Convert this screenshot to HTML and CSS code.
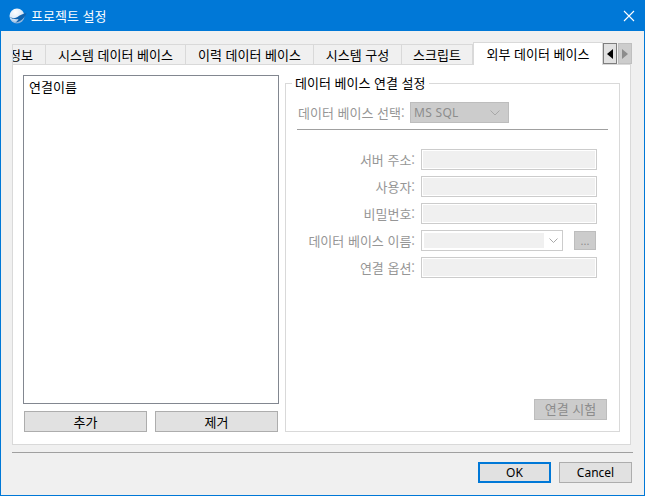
FILE: index.html
```html
<!DOCTYPE html>
<html lang="ko">
<head>
<meta charset="utf-8">
<title>프로젝트 설정</title>
<link rel="stylesheet" href="styles.css">
</head>
<body>
<div class="window">
  <header class="titlebar">
    <svg class="app-icon" width="18" height="16" viewBox="0 0 18 16">
      <defs><radialGradient id="g" cx="0.4" cy="0.25" r="0.85"><stop offset="0" stop-color="#ffffff"/><stop offset="0.55" stop-color="#dbe9f7"/><stop offset="1" stop-color="#5f97cf"/></radialGradient></defs>
      <ellipse cx="8" cy="8" rx="7.500" ry="7.500" fill="url(#g)"/>
      <path d="M0.500 9c3 1.500 6 1.500 8 0 2-1.500 5-3.500 9-4-1 3-3 5.500-5 7-2 1.500-4 2.500-6 2.500 1.500-1 2.500-2.200 3-3.500-3 .5-6.500 0-9-2z" fill="#0f62ae"/>
    </svg>
    <span class="title">프로젝트 설정</span>
    <svg class="close" width="12" height="12" viewBox="0 0 12 12"><path d="M1 1l10 10M11 1L1 11" stroke="#fff" stroke-width="1.100" fill="none"/></svg>
  </header>
  <main class="content">
    <div class="tabstrip">
      <div class="tab tab-clip">정보</div>
      <div class="tab tab-a">시스템 데이터 베이스</div>
      <div class="tab tab-b">이력 데이터 베이스</div>
      <div class="tab tab-c">시스템 구성</div>
      <div class="tab tab-d">스크립트</div>
      <div class="tab tab-active">외부 데이터 베이스</div>
      <div class="spin spin-on"><svg width="6" height="10" viewBox="0 0 6 10"><path d="M6 0v10L0 5z" fill="#000"/></svg></div>
      <div class="spin spin-off"><svg width="6" height="10" viewBox="0 0 6 10"><path d="M0 0v10l6-5z" fill="#8c8c8c"/></svg></div>
    </div>
    <section class="panel">
      <div class="left">
        <div class="list">연결이름</div>
        <div class="left-actions">
          <button class="btn">추가</button>
          <button class="btn">제거</button>
        </div>
      </div>
      <fieldset class="group">
        <legend class="legend">데이터 베이스 연결 설정</legend>
        <div class="db-row">
          <span class="db-label">데이터 베이스 선택:</span>
          <div class="db-select"><span>MS SQL</span>
            <svg width="10" height="6" viewBox="0 0 10 6"><path d="M.5.500L5 5 9.500.5" stroke="#a8a8a8" fill="none"/></svg>
          </div>
        </div>
        <div class="rule"></div>
        <div class="form">
          <div class="row"><span class="label">서버 주소:</span><div class="field"></div></div>
          <div class="row"><span class="label">사용자:</span><div class="field"></div></div>
          <div class="row"><span class="label">비밀번호:</span><div class="field"></div></div>
          <div class="row">
            <span class="label">데이터 베이스 이름:</span>
            <div class="combo"><div class="combo-fill"></div>
              <svg width="9" height="5" viewBox="0 0 9 5"><path d="M.5.500L4.500 4.500l4-4" stroke="#a8a8a8" fill="none"/></svg>
            </div>
            <div class="browse">...</div>
          </div>
          <div class="row"><span class="label">연결 옵션:</span><div class="field"></div></div>
        </div>
        <div class="test-row"><div class="test">연결 시험</div></div>
      </fieldset>
    </section>
    <div class="divider"></div>
    <footer class="footer">
      <button class="btn btn-dlg btn-default">OK</button>
      <button class="btn btn-dlg">Cancel</button>
    </footer>
  </main>
</div>
</body>
</html>
```
FILE: styles.css
```css
* { box-sizing: border-box; }
html, body { margin: 0; padding: 0; }
body {
  width: 645px;
  height: 496px;
  overflow: hidden;
  font-family: "Noto Sans CJK KR", "Noto Sans", sans-serif;
  font-size: 13px;
  color: #000;
}
.window {
  width: 645px;
  height: 496px;
  border: 1px solid #0078d7;
  border-top: 0;
  background: #f0f0f0;
  display: flex;
  flex-direction: column;
}
.titlebar {
  height: 31px;
  margin: 0 -1px;
  background: #0078d7;
  color: #fff;
  display: flex;
  align-items: center;
  padding: 0 8px 0 9px;
}
.app-icon { flex: none; margin-right: 4px; }
.title { flex: 1; font-size: 13px; }
.close { flex: none; margin-right: 2px; }
.content { flex: 1; display: flex; flex-direction: column; padding: 0 12px 0 11px; }
.tabstrip {
  height: 34px;
  padding-top: 11px;
  display: flex;
  align-items: flex-start;
}
.tab {
  height: 20px;
  margin-top: 2px;
  background: #f0f0f0;
  border: 1px solid #d9d9d9;
  border-bottom: 0;
  border-left: 0;
  display: flex;
  align-items: center;
  justify-content: center;
  white-space: nowrap;
  overflow: hidden;
  line-height: 18px;
}
.tab-clip { width: 34px; justify-content: flex-end; padding-right: 12px; border-left: 1px solid #d9d9d9; }
.tab-a { width: 140px; }
.tab-b { width: 128px; }
.tab-c { width: 88px; }
.tab-d { width: 71px; }
.tab-active {
  width: 130px;
  height: 23px;
  margin-top: 0;
  background: #fff;
  border-left: 1px solid #d9d9d9;
  position: relative;
  z-index: 1;
}
.spin {
  width: 14px;
  height: 21px;
  margin-top: 1px;
  display: flex;
  align-items: center;
  justify-content: center;
  border: 1px solid #a9a9a9;
}
.spin-on { background: #e1e1e1; border-color: #7e7e7e; }
.spin-off { margin-left: 1px; background: #cccccc; border-color: #bfbfbf; }
.panel {
  height: 381px;
  width: 619px;
  margin-top: -1px;
  background: #fff;
  border: 1px solid #d9d9d9;
  padding: 10px 10px 12px 10px;
  display: flex;
  gap: 6px;
}
.left { width: 256px; flex: none; display: flex; flex-direction: column; }
.list {
  flex: 1;
  border: 1px solid #828790;
  background: #fff;
  padding: 2px 5px;
  line-height: 18px;
}
.left-actions { display: flex; gap: 8px; padding: 7px 1px 0; }
.btn {
  width: 123px;
  height: 21px;
  padding: 0;
  background: #e1e1e1;
  border: 1px solid #adadad;
  border-radius: 0;
  font: inherit;
  line-height: 17px;
  color: #000;
}
.group {
  flex: 1;
  margin: 0;
  min-width: 0;
  padding: 0 12px 11px;
  border: 1px solid #d9d9d9;
  display: flex;
  flex-direction: column;
}
.legend { margin-left: -6px; padding: 0 3px; line-height: 16px; }
.db-row { display: flex; align-items: center; margin-top: 11px; gap: 6px; }
.db-label { color: #969696; width: 106px; white-space: nowrap; line-height: 16px; }
.db-select {
  width: 99px;
  height: 21px;
  background: #cccccc;
  border: 1px solid #bdbdbd;
  color: #8c8c8c;
  display: flex;
  align-items: center;
  justify-content: space-between;
  padding: 0 8px 0 3px;
  font-family: "Noto Sans", sans-serif;
  font-size: 12px;
  letter-spacing: .3px;
}
.rule { height: 1px; background: #a0a0a0; margin: 6px -1px 0; }
.form { display: flex; flex-direction: column; gap: 6px; margin-top: 19px; }
.row { display: flex; align-items: center; height: 21px; }
.label { width: 117px; flex: none; text-align: right; color: #969696; white-space: nowrap; line-height: 16px; }
.field {
  width: 176px;
  height: 21px;
  margin-left: 6px;
  border: 1px solid #cccccc;
  background: #f0f0f0;
  box-shadow: inset 0 0 0 1px #fff;
}
.combo {
  width: 142px;
  height: 21px;
  margin-left: 6px;
  border: 1px solid #cccccc;
  background: #fff;
  display: flex;
  align-items: center;
  padding: 2px 4px 2px 2px;
  justify-content: space-between;
}
.combo-fill { width: 120px; height: 15px; background: #f0f0f0; }
.browse {
  width: 22px;
  height: 19px;
  margin-left: 11px;
  background: #cccccc;
  border: 1px solid #bdbdbd;
  color: #8c8c8c;
  text-align: center;
  line-height: 17px;
  font-size: 11px;
  font-family: "Noto Sans", sans-serif;
}
.test-row { flex: 1; display: flex; justify-content: flex-end; align-items: flex-end; }
.test {
  width: 73px;
  height: 21px;
  background: #cccccc;
  border: 1px solid #bdbdbd;
  color: #8c8c8c;
  text-align: center;
  line-height: 18px;
}
.divider { height: 1px; width: 621px; background: #a0a0a0; margin-top: 7px; }
.footer { display: flex; justify-content: flex-end; gap: 8px; padding-top: 9px; }
.btn-dlg { width: 73px; font-family: "Noto Sans", sans-serif; font-size: 12px; }
.btn-default { border: 2px solid #0078d7; }
```
